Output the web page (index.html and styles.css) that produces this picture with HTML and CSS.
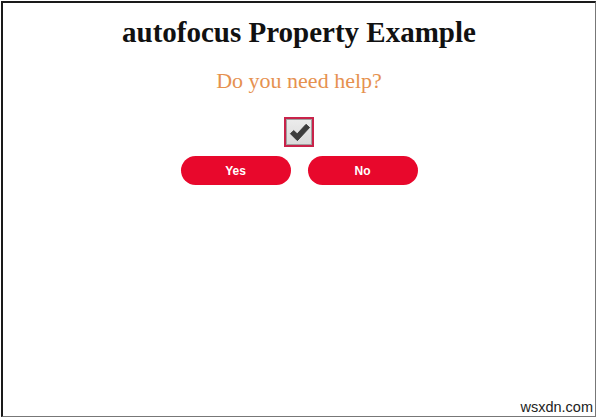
FILE: index.html
```html
<!DOCTYPE html>
<html>
<head>
<meta charset="utf-8">
<link rel="stylesheet" href="styles.css">
</head>
<body>
<div class="frame">
  <h1 class="title">autofocus Property Example</h1>
  <p class="question">Do you need help?</p>
  <div class="check-row">
    <span class="checkbox">
      <svg viewBox="0 0 24 24" width="23" height="23"><path d="M2.5 13.2 L6 10 L9.6 13.4 L18.8 3.5 L22.5 6.8 L9.8 20.5 Z" fill="#3d3d3d" stroke="#3d3d3d" stroke-width="1" stroke-linejoin="round"/></svg>
    </span>
  </div>
  <div class="buttons">
    <button class="btn">Yes</button>
    <button class="btn">No</button>
  </div>
  <div class="spacer"></div>
  <div class="watermark">wsxdn.com</div>
</div>
</body>
</html>
```
FILE: styles.css
```css
html, body {
  margin: 0;
  padding: 0;
  background: #ffffff;
}
.frame {
  margin: 1px 0 0 1px;
  width: 592px;
  height: 413px;
  border-top: 2px solid #1a1a1a;
  border-left: 2px solid #1a1a1a;
  border-right: 1px solid #777;
  border-bottom: 1px solid #777;
  display: flex;
  flex-direction: column;
  align-items: center;
  font-family: "Liberation Serif", "Times New Roman", serif;
}
.title {
  margin: 12px 0 0 0;
  font-size: 29px;
  font-weight: bold;
  color: #111;
  line-height: 34px;
}
.question {
  margin: 19px 0 0 0;
  font-size: 22px;
  color: #e6914f;
  line-height: 26px;
}
.check-row {
  margin-top: 23px;
  display: flex;
}
.checkbox {
  width: 26px;
  height: 26px;
  border: 2px solid #c8234a;
  box-shadow: inset 0 0 0 1px #a0a0a0;
  background: linear-gradient(#ececec, #dadada);
  display: flex;
  align-items: center;
  justify-content: center;
}
.buttons {
  margin-top: 9px;
  display: flex;
  gap: 17px;
}
.btn {
  width: 110px;
  height: 29px;
  border: none;
  border-radius: 15px;
  background: #e8082c;
  color: #fff;
  font-family: "Liberation Sans", Arial, sans-serif;
  font-weight: bold;
  font-size: 12px;
  padding: 0;
}
.spacer {
  flex: 1;
}
.watermark {
  align-self: flex-end;
  margin: 0 2px 1px 0;
  font-family: "Liberation Sans", Arial, sans-serif;
  font-size: 14.5px;
  color: #222;
}
```
